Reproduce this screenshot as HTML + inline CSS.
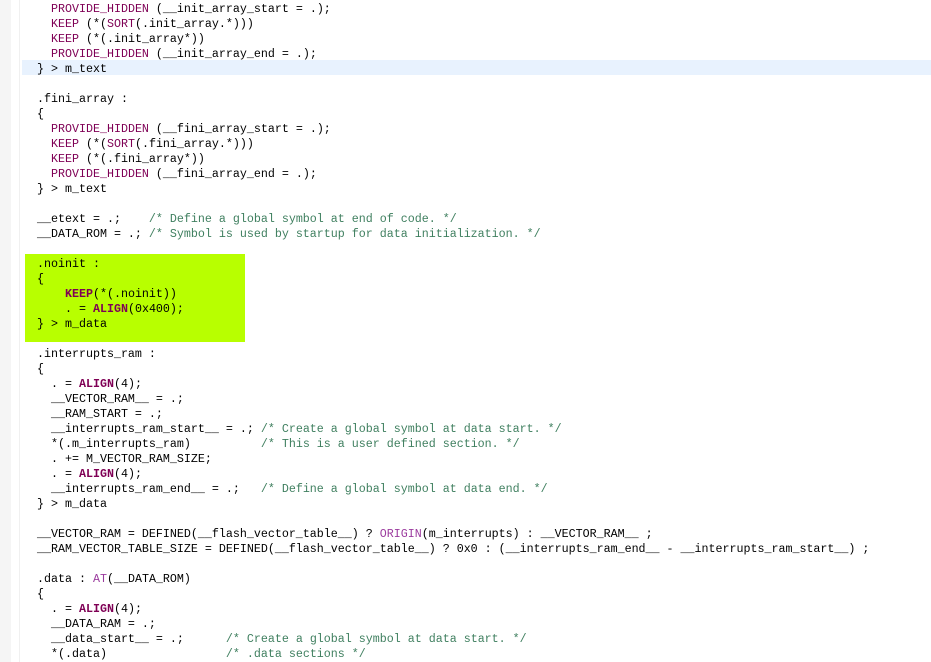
<!DOCTYPE html>
<html><head><meta charset="utf-8"><style>
html,body{margin:0;padding:0;background:#fff;width:931px;height:662px;overflow:hidden}
.g{position:absolute;left:0;top:0;width:11px;height:662px;background:#f5f5f5}
.gl{position:absolute;left:19px;top:0;width:1px;height:662px;background:#f0f0f0}
.cur{position:absolute;left:22px;top:60px;width:909px;height:15px;background:#e8f2fe}
.hl{position:absolute;left:25px;top:254px;width:220px;height:88px;background:#b8ff00}
pre{position:absolute;left:37px;top:2px;margin:0;font-family:"Liberation Mono",monospace;font-size:11.67px;line-height:15px;color:#000}
.k{color:#7f0055}
.o{color:#9b3b9e}
.c{color:#3f7f5f}
</style></head><body>
<div class="g"></div><div class="gl"></div><div class="cur"></div><div class="hl"></div>
<pre>  <span class="k">PROVIDE_HIDDEN</span> (__init_array_start = .);
  <span class="k">KEEP</span> (*(<span class="k">SORT</span>(.init_array.*)))
  <span class="k">KEEP</span> (*(.init_array*))
  <span class="k">PROVIDE_HIDDEN</span> (__init_array_end = .);
} &gt; m_text

.fini_array :
{
  <span class="k">PROVIDE_HIDDEN</span> (__fini_array_start = .);
  <span class="k">KEEP</span> (*(<span class="k">SORT</span>(.fini_array.*)))
  <span class="k">KEEP</span> (*(.fini_array*))
  <span class="k">PROVIDE_HIDDEN</span> (__fini_array_end = .);
} &gt; m_text

__etext = .;    <span class="c">/* Define a global symbol at end of code. */</span>
__DATA_ROM = .; <span class="c">/* Symbol is used by startup for data initialization. */</span>

.noinit :
{
    <span class="k"><b>KEEP</b></span>(*(.noinit))
    . = <span class="k"><b>ALIGN</b></span>(0x400);
} &gt; m_data

.interrupts_ram :
{
  . = <span class="k"><b>ALIGN</b></span>(4);
  __VECTOR_RAM__ = .;
  __RAM_START = .;
  __interrupts_ram_start__ = .; <span class="c">/* Create a global symbol at data start. */</span>
  *(.m_interrupts_ram)          <span class="c">/* This is a user defined section. */</span>
  . += M_VECTOR_RAM_SIZE;
  . = <span class="k"><b>ALIGN</b></span>(4);
  __interrupts_ram_end__ = .;   <span class="c">/* Define a global symbol at data end. */</span>
} &gt; m_data

__VECTOR_RAM = DEFINED(__flash_vector_table__) ? <span class="o">ORIGIN</span>(m_interrupts) : __VECTOR_RAM__ ;
__RAM_VECTOR_TABLE_SIZE = DEFINED(__flash_vector_table__) ? 0x0 : (__interrupts_ram_end__ - __interrupts_ram_start__) ;

.data : <span class="o">AT</span>(__DATA_ROM)
{
  . = <span class="k"><b>ALIGN</b></span>(4);
  __DATA_RAM = .;
  __data_start__ = .;      <span class="c">/* Create a global symbol at data start. */</span>
  *(.data)                 <span class="c">/* .data sections */</span>
</pre>
</body></html>
